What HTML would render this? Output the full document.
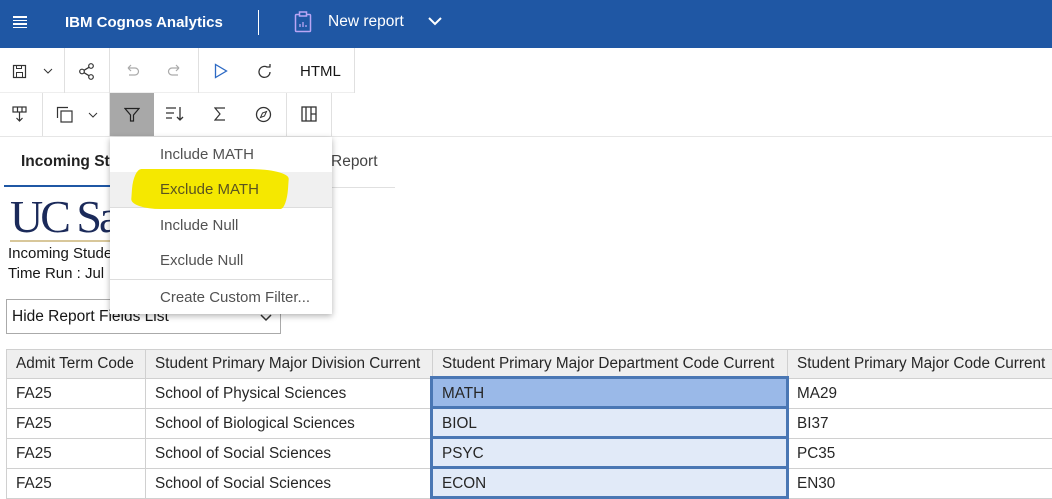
<!DOCTYPE html>
<html><head><style>
*{margin:0;padding:0;box-sizing:border-box}
body{width:1052px;height:496px;overflow:hidden;background:#fff;font-family:"Liberation Sans",sans-serif;position:relative;color:#161616}
.a{position:absolute}
.hdr{left:0;top:0;width:1052px;height:48px;background:#1f57a4;color:#fff}
.tb{border-right:1px solid #e0e0e0}
svg{position:absolute}
.menu div{position:absolute;left:50px;font-size:15px;color:#525252}
table{position:absolute;left:6px;top:349px;border-collapse:collapse;font-size:15.3px;color:#262626;table-layout:fixed;width:1060px}
td,th{border:1px solid #d0d0d0;height:30px;padding:0 9px;text-align:left;font-weight:normal;white-space:nowrap;overflow:hidden}
th{background:#efefef;height:29px}
</style></head><body>
<div class="a hdr">
 <div class="a" style="left:13px;top:16px;width:14px;height:1.5px;background:#fff"></div>
 <div class="a" style="left:13px;top:19.5px;width:14px;height:1.5px;background:#fff"></div>
 <div class="a" style="left:13px;top:23px;width:14px;height:1.5px;background:#fff"></div>
 <div class="a" style="left:13px;top:26.5px;width:14px;height:1.5px;background:#fff"></div>
 <div class="a" style="left:65px;top:14px;font-size:15px;font-weight:bold">IBM Cognos Analytics</div>
 <div class="a" style="left:258px;top:10px;width:1px;height:25px;background:#fff"></div>
 <svg style="left:294px;top:11px" width="18" height="22" viewBox="0 0 18 22"><rect x="1.5" y="3.5" width="15" height="17" rx="1" fill="none" stroke="#b9a6f5" stroke-width="1.5"/><rect x="5.5" y="1" width="7" height="4" fill="#1f57a4" stroke="#b9a6f5" stroke-width="1.5"/><path d="M6 16v-3M9 16v-5M12 16v-2" stroke="#b9a6f5" stroke-width="1.3"/></svg>
 <div class="a" style="left:328px;top:13px;font-size:15.5px">New report</div>
 <svg style="left:427px;top:15px" width="16" height="12"><path d="M2 3l6 6 6-6" fill="none" stroke="#fff" stroke-width="2"/></svg>
</div>
<div class="a" style="left:0;top:48px;width:355px;height:45px;border-bottom:1px solid #eee"></div>
<div class="a tb" style="left:0;top:48px;width:65px;height:45px"></div>
<div class="a tb" style="left:65px;top:48px;width:45px;height:45px"></div>
<div class="a tb" style="left:110px;top:48px;width:89px;height:45px"></div>
<div class="a tb" style="left:199px;top:48px;width:156px;height:45px"></div>
<svg style="left:12px;top:64px" width="16" height="16"><rect x="1.5" y="1.5" width="12" height="12" fill="none" stroke="#333" stroke-width="1.2"/><rect x="4.5" y="8.5" width="6" height="5" fill="none" stroke="#333"/><rect x="4.5" y="1.5" width="5" height="3" fill="none" stroke="#333"/></svg>
<svg style="left:43px;top:68px" width="10" height="6"><path d="M1 1l4 4 4-4" fill="none" stroke="#333"/></svg>
<svg style="left:78px;top:63px" width="17" height="17"><circle cx="4" cy="8.5" r="2.3" fill="none" stroke="#333" stroke-width="1.2"/><circle cx="13" cy="3" r="2.3" fill="none" stroke="#333" stroke-width="1.2"/><circle cx="13" cy="14" r="2.3" fill="none" stroke="#333" stroke-width="1.2"/><path d="M6 7.3l5-3M6 9.7l5 3" stroke="#333" stroke-width="1.2"/></svg>
<svg style="left:124px;top:64px" width="16" height="14"><path d="M4 4h7a3.5 3.5 0 010 7H5M4 4l3-3M4 4l3 3" fill="none" stroke="#aaa" stroke-width="1.2"/></svg>
<svg style="left:167px;top:64px" width="16" height="14"><path d="M12 4H5a3.5 3.5 0 000 7h6M12 4L9 1M12 4L9 7" fill="none" stroke="#aaa" stroke-width="1.2"/></svg>
<svg style="left:214px;top:63px" width="14" height="16"><path d="M1.5 1.5v13l11-6.5z" fill="none" stroke="#2d6ac4" stroke-width="1.3"/></svg>
<svg style="left:257px;top:63px" width="16" height="17"><path d="M13 9a5.5 5.5 0 11-3-5H13M13 1v3.5" fill="none" stroke="#333" stroke-width="1.3"/></svg>
<div class="a" style="left:300px;top:63px;font-size:15px">HTML</div>
<div class="a tb" style="left:0;top:93px;width:43px;height:44px"></div>
<div class="a tb" style="left:43px;top:93px;width:67px;height:44px"></div>
<div class="a" style="left:110px;top:93px;width:44px;height:44px;background:#a8a8a8"></div>
<div class="a tb" style="left:154px;top:93px;width:133px;height:44px"></div>
<div class="a tb" style="left:287px;top:93px;width:45px;height:44px"></div>
<div class="a" style="left:0;top:136px;width:1052px;height:1px;background:#e6e6e6"></div>
<svg style="left:12px;top:106px" width="16" height="16"><rect x="1" y="1" width="13" height="5" fill="none" stroke="#333" stroke-width="1.2"/><path d="M5.5 1v5M10 1v5M7.5 6v9M4.5 12l3 3 3-3" fill="none" stroke="#333" stroke-width="1.2"/></svg>
<svg style="left:56px;top:106px" width="18" height="18"><path d="M1.5 12V1.5H12" fill="none" stroke="#333" stroke-width="1.2"/><rect x="5" y="5" width="11" height="11" fill="none" stroke="#333" stroke-width="1.2"/></svg>
<svg style="left:88px;top:112px" width="10" height="6"><path d="M1 1l4 4 4-4" fill="none" stroke="#333"/></svg>
<svg style="left:124px;top:107px" width="16" height="16"><path d="M1 1.5h14L9.5 8v6h-3V8z" fill="none" stroke="#222" stroke-width="1.2"/></svg>
<svg style="left:166px;top:106px" width="20" height="16"><path d="M0 2h10M0 7h8M0 12h6M14 1v13M11 11l3 3 3-3" fill="none" stroke="#333" stroke-width="1.3"/></svg>
<svg style="left:214px;top:107px" width="12" height="14"><path d="M11 1H1l5 6-5 6h10" fill="none" stroke="#333" stroke-width="1.2"/></svg>
<svg style="left:255px;top:106px" width="17" height="17"><circle cx="8.5" cy="8.5" r="7" fill="none" stroke="#333" stroke-width="1.3"/><path d="M11.5 5.5l-2 4.5-4 1.5 2-4.5z" fill="none" stroke="#333"/></svg>
<svg style="left:301px;top:106px" width="16" height="16"><rect x="1" y="1" width="14" height="14" fill="none" stroke="#333" stroke-width="1.3"/><path d="M5 1v14M10 1v14M10 8h5" stroke="#333" stroke-width="1.3"/></svg>
<div class="a" style="left:21px;top:153px;font-size:15.5px;font-weight:bold;color:#222">Incoming Stu</div>
<div class="a" style="left:331px;top:153px;font-size:15.5px;color:#444">Report</div>
<div class="a" style="left:4px;top:185px;width:106px;height:2px;background:#1f57a4"></div>
<div class="a" style="left:110px;top:187px;width:285px;height:1px;background:#e0e0e0"></div>
<div class="a" style="left:10px;top:194px;font-family:'Liberation Serif',serif;font-size:46px;color:#1b2a5a;letter-spacing:-3px;line-height:46px">UC Sa</div>
<div class="a" style="left:10px;top:240px;width:110px;height:2px;background:#d8c79a"></div>
<div class="a" style="left:8px;top:245px;font-size:15px">Incoming Stude</div>
<div class="a" style="left:8px;top:265px;font-size:15px">Time Run : Jul</div>
<div class="a" style="left:6px;top:299px;width:275px;height:35px;border:1px solid #aaa;font-size:15.5px;padding:8px 5px">Hide Report Fields List</div>
<svg style="left:260px;top:314px" width="12" height="8"><path d="M1 1l5 5 5-5" fill="none" stroke="#333" stroke-width="1.5"/></svg>
<div class="a menu" style="left:110px;top:137px;width:222px;height:177px;background:#fff;box-shadow:0 2px 6px rgba(0,0,0,.3)">
 <div style="top:9px">Include MATH</div>
 <div class="a" style="left:0;top:35px;width:222px;height:36px;background:#f0f0f0;border-bottom:1px solid #ddd"></div>
 <div class="a" style="left:22px;top:32px;width:156px;height:40px;background:#f5e800;border-radius:8px 40px 6px 30px / 20px 10px 20px 10px;transform:skewX(-4deg)"></div>
 <div style="top:44px;color:#5a5420">Exclude MATH</div>
 <div style="top:80px">Include Null</div>
 <div style="top:115px">Exclude Null</div>
 <div class="a" style="left:0;top:142px;width:222px;height:1px;background:#ddd"></div>
 <div style="top:152px">Create Custom Filter...</div>
</div>
<table>
<colgroup><col style="width:139px"><col style="width:287px"><col style="width:355px"><col style="width:279px"></colgroup>
<tr><th>Admit Term Code</th><th>Student Primary Major Division Current</th><th>Student Primary Major Department Code Current</th><th>Student Primary Major Code Current</th></tr>
<tr><td>FA25</td><td>School of Physical Sciences</td><td style="background:#9ab9e8">MATH</td><td>MA29</td></tr>
<tr><td>FA25</td><td>School of Biological Sciences</td><td style="background:#e1eaf8">BIOL</td><td>BI37</td></tr>
<tr><td>FA25</td><td>School of Social Sciences</td><td style="background:#e1eaf8">PSYC</td><td>PC35</td></tr>
<tr><td>FA25</td><td>School of Social Sciences</td><td style="background:#e1eaf8">ECON</td><td>EN30</td></tr>
</table>
<div class="a" style="left:430px;top:376px;width:359px;height:33px;border:3px solid #4a77b4"></div>
<div class="a" style="left:430px;top:406px;width:359px;height:33px;border:3px solid #4a77b4"></div>
<div class="a" style="left:430px;top:436px;width:359px;height:33px;border:3px solid #4a77b4"></div>
<div class="a" style="left:430px;top:466px;width:359px;height:33px;border:3px solid #4a77b4"></div>
</body></html>
